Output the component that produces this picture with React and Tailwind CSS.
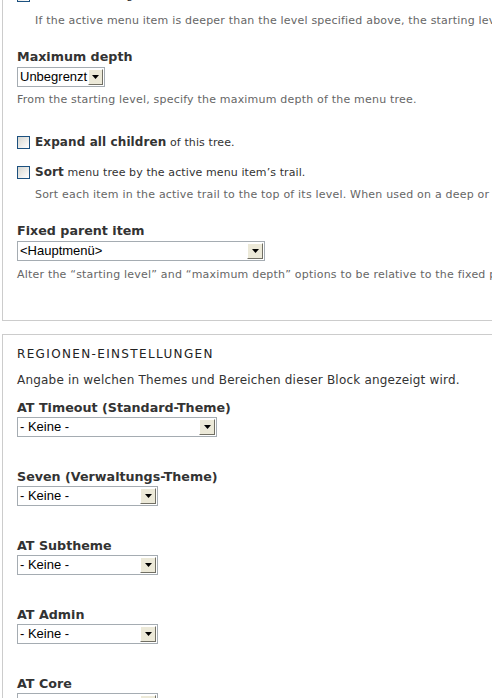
import React from "react";

const font = "font-['DejaVu_Sans',Verdana,sans-serif]";

function Select({ value, width }) {
  return (
    <div className={`flex h-[20px] border border-[#a5acb2] bg-white ${width}`}>
      <span className="flex-1 whitespace-nowrap pl-[2px] font-['Liberation_Sans',Arial,sans-serif] text-[13px] leading-[18px] text-black">
        {value}
      </span>
      <span className="m-px flex w-[16px] items-center justify-center border border-t-white border-l-white border-r-[#716f64] border-b-[#716f64] bg-[#ece9d8]">
        <svg width="7" height="4" viewBox="0 0 7 4">
          <path d="M0 0h7L3.5 4z" fill="#000" />
        </svg>
      </span>
    </div>
  );
}

function Checkbox({ className = "", children }) {
  return (
    <div className={`flex h-[13px] items-center whitespace-nowrap ${className}`}>
      <span className="mr-[5px] h-[13px] w-[13px] shrink-0 border border-[#1c5180] bg-linear-to-br from-[#d6d6d0] to-white" />
      <span className="text-[11px] leading-[13px] tracking-[0.1px] text-[#333]">{children}</span>
    </div>
  );
}

function Label({ className = "", children }) {
  return (
    <div className={`whitespace-nowrap text-[12.7px] font-bold leading-[16px] text-[#333] ${className}`}>
      {children}
    </div>
  );
}

function Desc({ className = "", children }) {
  return (
    <div className={`whitespace-nowrap text-[11px] leading-[14px] tracking-[0.2px] text-[#666] ${className}`}>
      {children}
    </div>
  );
}

const themes = [
  { name: "AT Timeout (Standard-Theme)", width: "w-[200px]", mt: "mt-[12px]" },
  { name: "Seven (Verwaltungs-Theme)", width: "w-[141px]", mt: "mt-[32px]" },
  { name: "AT Subtheme", width: "w-[141px]", mt: "mt-[32px]" },
  { name: "AT Admin", width: "w-[141px]", mt: "mt-[32px]" },
  { name: "AT Core", width: "w-[141px]", mt: "mt-[32px]" },
];

export default function App() {
  return (
    <div className={`h-[698px] w-[492px] overflow-hidden bg-white ${font}`}>
      <div className="ml-[2px] w-[600px] border-b border-l border-[#cccccc] pb-[38px] pl-[14px]">
        <Checkbox className="mt-[-11px]">Make the starting level follow the active menu item.</Checkbox>
        <Desc className="mt-[12px] pl-[18px]">
          If the active menu item is deeper than the level specified above, the starting level will follow the active menu item.
        </Desc>

        <Label className="mt-[21px]">Maximum depth</Label>
        <div className="mt-[2px]">
          <Select value="Unbegrenzt" width="w-[88px]" />
        </div>
        <Desc className="mt-[6px]">From the starting level, specify the maximum depth of the menu tree.</Desc>

        <Checkbox className="mt-[29px]">
          <b className="text-[12px]">Expand all children</b> of this tree.
        </Checkbox>

        <Checkbox className="mt-[17px]">
          <b className="text-[12px]">Sort</b> menu tree by the active menu item’s trail.
        </Checkbox>
        <Desc className="mt-[9px] pl-[18px]">
          Sort each item in the active trail to the top of its level. When used on a deep or wide menu tree, this may be confusing.
        </Desc>

        <Label className="mt-[21px]">Fixed parent item</Label>
        <div className="mt-[2px]">
          <Select value="<Hauptmenü>" width="w-[248px]" />
        </div>
        <Desc className="mt-[7px]">
          Alter the “starting level” and “maximum depth” options to be relative to the fixed parent item. The tree of links will only contain children of the selected menu item.
        </Desc>
      </div>

      <div className="ml-[2px] mt-[13px] w-[600px] border-l border-t border-[#cccccc] pl-[14px] pt-[11px]">
        <div className="whitespace-nowrap text-[12px] uppercase leading-[16px] tracking-[1.35px] text-[#222]">
          Regionen-Einstellungen
        </div>
        <div className="mt-[10px] whitespace-nowrap text-[12px] leading-[16px] tracking-[0.2px] text-[#333]">
          Angabe in welchen Themes und Bereichen dieser Block angezeigt wird.
        </div>

        {themes.map((t) => (
          <div key={t.name} className={t.mt}>
            <Label>{t.name}</Label>
            <div className="mt-[1px]">
              <Select value="- Keine -" width={t.width} />
            </div>
          </div>
        ))}
      </div>
    </div>
  );
}
